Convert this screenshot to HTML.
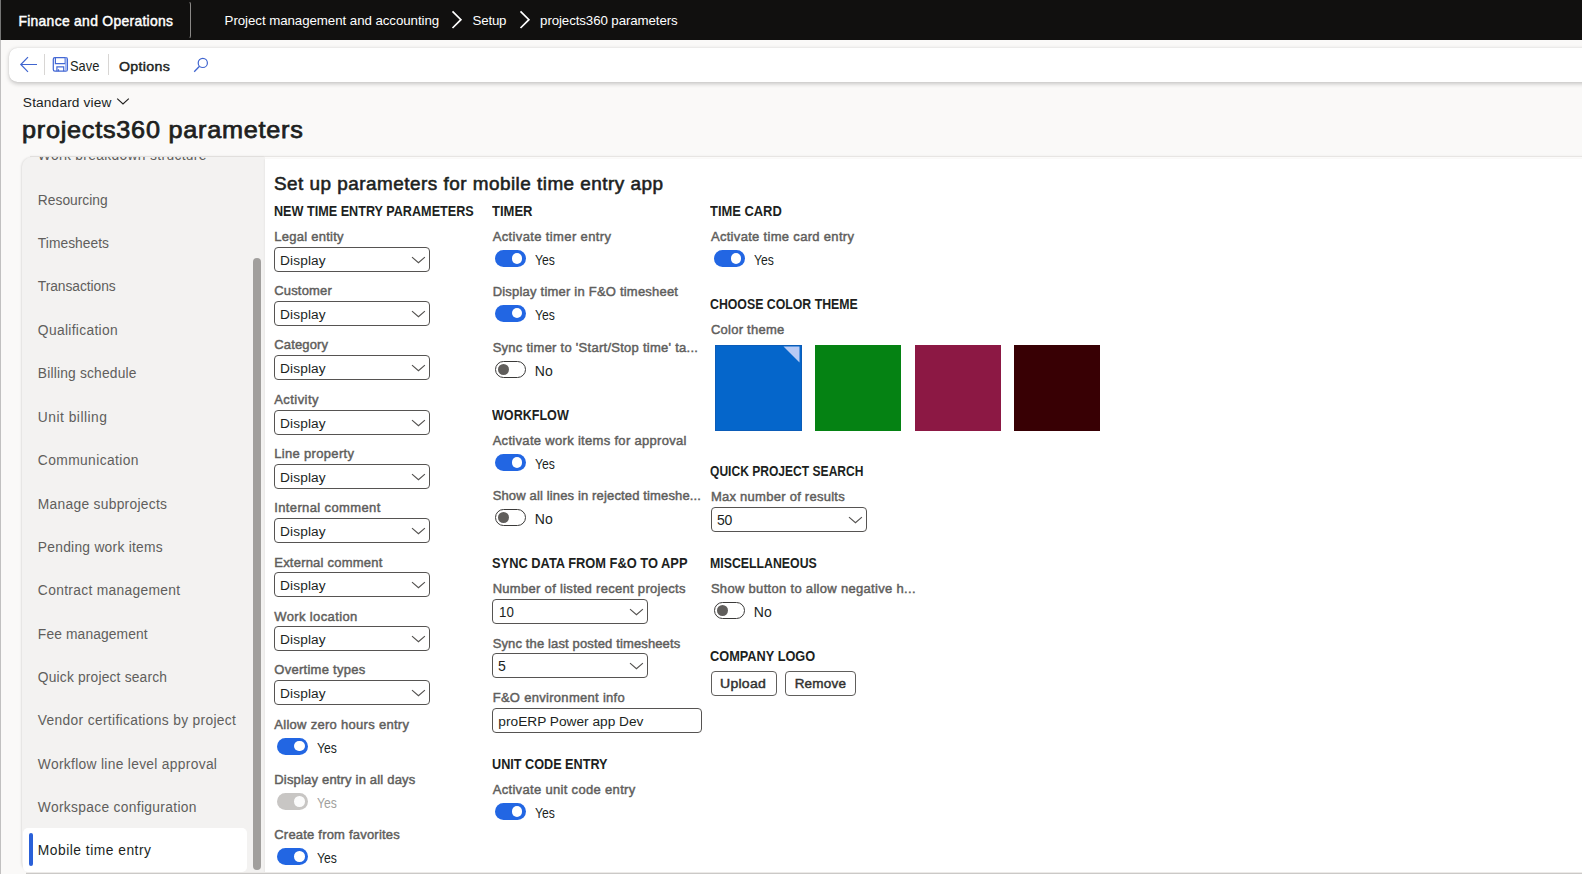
<!DOCTYPE html><html><head><meta charset="utf-8"><title>projects360 parameters</title><style>
html,body{margin:0;padding:0}
body{width:1582px;height:874px;overflow:hidden;background:#faf9f8;position:relative;font-family:"Liberation Sans",sans-serif}
.abs,.t,.box,.tg,.chev,svg.ic{position:absolute}
.t{white-space:nowrap;line-height:20px;z-index:5}
.t{transform-origin:0 50%}
.t.b{font-weight:bold}
.t.sb{-webkit-text-stroke:0.45px currentColor}
.t.sb2{-webkit-text-stroke:0.55px currentColor}
.t.sb3{-webkit-text-stroke:0.75px currentColor}
#topbar{left:0;top:0;width:1582px;height:40px;background:#11100f}
#leftedge{left:0;top:0;width:1.1px;height:874px;background:rgba(165,165,165,.68);z-index:20}
#tdiv{box-sizing:border-box;left:176px;top:0.6px;width:15.2px;height:38.8px;border:1.2px solid transparent;border-right-color:#8a8886;border-radius:0 3.5px 3.5px 0}
#toolbar{left:9px;top:47.5px;width:1600px;height:34.3px;background:#fff;border-radius:8.5px;box-shadow:0 1.5px 4px rgba(0,0,0,.2),0 0 1px rgba(0,0,0,.15)}
.vdiv{width:1px;background:#d8d6d4;top:54px;height:21px}
#side{left:21.6px;top:156.6px;width:243.4px;height:715.8px;background:#f3f2f1;border-radius:10px 0 0 10px;box-shadow:-1px 0 2px rgba(0,0,0,.10)}
#topline{left:30px;top:155.7px;width:1560px;height:1.3px;background:#e7e5e3;box-shadow:0 -1px 2px rgba(0,0,0,.035)}
#content{left:265px;top:159px;width:1330px;height:714px;background:#fff;box-shadow:-1px 0 1.5px rgba(0,0,0,.04)}
#contentpre{left:265px;top:157px;width:1330px;height:2px;background:#fcfbfa}
#bottomline{left:26px;top:872px;width:1560px;height:2px;background:linear-gradient(#eceae8 0,#eceae8 50%,#cbc9c7 50%,#cbc9c7 100%)}
#sel{left:23px;top:828px;width:224px;height:43.6px;background:#fff;border-radius:5px}
#selbar{left:28.9px;top:833px;width:4.1px;height:33px;background:#2a60d8;border-radius:2.1px}
#scroll{left:253.25px;top:258px;width:8px;height:612px;background:#a19f9d;border-radius:4px}
.box{box-sizing:border-box;border:1px solid #565452;border-radius:4px;background:#fff}
.tg{box-sizing:border-box;width:31px;height:17px;border-radius:9px}
.tg.on{background:#2266e3}
.tg.on i{position:absolute;left:16.9px;top:3.2px;width:10.6px;height:10.6px;border-radius:50%;background:#fff}
.tg.dis{background:#c8c6c4}
.tg.dis i{position:absolute;left:16.9px;top:3.2px;width:10.6px;height:10.6px;border-radius:50%;background:#fbfbfb}
.tg.off{background:#fff;border:1px solid #3b3a39}
.tg.off i{position:absolute;left:2px;top:2px;width:11px;height:11px;border-radius:50%;background:#605e5c}
.sq{width:85.75px;height:85.6px;top:345px}
.btn{box-sizing:border-box;border:1px solid #605e5c;border-radius:4px;background:#fff;top:671px;height:25px}
#clipside{left:22px;top:157px;width:243px;height:716px;overflow:hidden}

</style></head><body>
<div id="topbar" class="abs"></div>
<div id="tdiv" class="abs"></div>
<svg class="ic" style="left:450px;top:10px" width="14" height="20" viewBox="0 0 14 20"><path d="M2.5 1.4 L10.9 9.7 L2.5 18" fill="none" stroke="#fff" stroke-width="1.7"/></svg>
<svg class="ic" style="left:517.5px;top:10px" width="14" height="20" viewBox="0 0 14 20"><path d="M2.5 1.4 L10.9 9.7 L2.5 18" fill="none" stroke="#fff" stroke-width="1.7"/></svg>
<div id="toolbar" class="abs"></div>
<div class="abs vdiv" style="left:44px"></div>
<div class="abs vdiv" style="left:108px"></div>
<svg class="ic" style="left:19px;top:55px" width="20" height="19" viewBox="0 0 20 19"><path d="M9 2.2 L1.8 9.5 L9 16.8 M1.8 9.5 L18 9.5" fill="none" stroke="#4065cf" stroke-width="1.2"/></svg>
<svg class="ic" style="left:52px;top:56px" width="17" height="17" viewBox="0 0 17 17"><rect x="1.3" y="1.6" width="14.1" height="13.6" rx="1.6" fill="none" stroke="#4468d4" stroke-width="1.25"/><path d="M3.4 1.6 V7.6 H13.2 V1.6" fill="none" stroke="#4468d4" stroke-width="1.2"/><path d="M13.9 1.6 V15" fill="none" stroke="#8aa4ee" stroke-width="1.4"/><path d="M4.9 15.2 V10.9 H11.7 V15.2 M6.5 15.2 V13.2" fill="none" stroke="#4468d4" stroke-width="1.2"/></svg>
<svg class="ic" style="left:193px;top:57px" width="16" height="16" viewBox="0 0 16 16"><circle cx="9.8" cy="5.9" r="4.6" fill="none" stroke="#4065cf" stroke-width="1.2"/><path d="M6.5 9.3 L1.2 14.8" stroke="#4065cf" stroke-width="1.3" fill="none"/></svg>
<svg class="ic" style="left:115.7px;top:96.5px" width="14" height="10" viewBox="0 0 14 10"><path d="M1.2 1.7 L7 7.0 L12.8 1.7" fill="none" stroke="#201f1e" stroke-width="1.15"/></svg>
<div id="topline" class="abs"></div>
<div id="side" class="abs"></div>
<div id="contentpre" class="abs"></div>
<div id="content" class="abs"></div>
<div id="bottomline" class="abs"></div>
<div id="sel" class="abs"></div>
<div id="selbar" class="abs"></div>
<div id="scroll" class="abs"></div>
<div class="abs sq" style="left:715.25px;width:86.5px;background:#0566cb;box-sizing:border-box;border:1px solid #0b5cb8"></div>
<svg class="ic" style="left:783.1px;top:346.3px" width="17" height="17" viewBox="0 0 17 17"><path d="M0.5 0.5 H16.5 V16.5 Z" fill="#b9cbf5"/></svg>
<div class="abs sq" style="left:815.2px;background:#058213"></div>
<div class="abs sq" style="left:915.2px;background:#8c1844"></div>
<div class="abs sq" style="left:1014.3px;background:#380004"></div>
<div class="abs btn" style="left:711px;width:66px"></div>
<div class="abs btn" style="left:785px;width:71px"></div>
<div id="leftedge" class="abs"></div>

<div class="box" style="left:274px;top:247px;width:156px;height:25px"></div>
<svg class="chev" style="left:410.8px;top:254.7px" width="15" height="10" viewBox="0 0 15 10"><path d="M1.0 2.1 L7.45 7.7 L13.9 2.1" fill="none" stroke="#53514f" stroke-width="1.15"/></svg>
<div class="box" style="left:274px;top:301px;width:156px;height:25px"></div>
<svg class="chev" style="left:410.8px;top:308.7px" width="15" height="10" viewBox="0 0 15 10"><path d="M1.0 2.1 L7.45 7.7 L13.9 2.1" fill="none" stroke="#53514f" stroke-width="1.15"/></svg>
<div class="box" style="left:274px;top:355px;width:156px;height:25px"></div>
<svg class="chev" style="left:410.8px;top:362.7px" width="15" height="10" viewBox="0 0 15 10"><path d="M1.0 2.1 L7.45 7.7 L13.9 2.1" fill="none" stroke="#53514f" stroke-width="1.15"/></svg>
<div class="box" style="left:274px;top:410px;width:156px;height:25px"></div>
<svg class="chev" style="left:410.8px;top:417.7px" width="15" height="10" viewBox="0 0 15 10"><path d="M1.0 2.1 L7.45 7.7 L13.9 2.1" fill="none" stroke="#53514f" stroke-width="1.15"/></svg>
<div class="box" style="left:274px;top:464px;width:156px;height:25px"></div>
<svg class="chev" style="left:410.8px;top:471.7px" width="15" height="10" viewBox="0 0 15 10"><path d="M1.0 2.1 L7.45 7.7 L13.9 2.1" fill="none" stroke="#53514f" stroke-width="1.15"/></svg>
<div class="box" style="left:274px;top:518px;width:156px;height:25px"></div>
<svg class="chev" style="left:410.8px;top:525.7px" width="15" height="10" viewBox="0 0 15 10"><path d="M1.0 2.1 L7.45 7.7 L13.9 2.1" fill="none" stroke="#53514f" stroke-width="1.15"/></svg>
<div class="box" style="left:274px;top:572px;width:156px;height:25px"></div>
<svg class="chev" style="left:410.8px;top:579.7px" width="15" height="10" viewBox="0 0 15 10"><path d="M1.0 2.1 L7.45 7.7 L13.9 2.1" fill="none" stroke="#53514f" stroke-width="1.15"/></svg>
<div class="box" style="left:274px;top:626px;width:156px;height:25px"></div>
<svg class="chev" style="left:410.8px;top:633.7px" width="15" height="10" viewBox="0 0 15 10"><path d="M1.0 2.1 L7.45 7.7 L13.9 2.1" fill="none" stroke="#53514f" stroke-width="1.15"/></svg>
<div class="box" style="left:274px;top:680px;width:156px;height:25px"></div>
<svg class="chev" style="left:410.8px;top:687.7px" width="15" height="10" viewBox="0 0 15 10"><path d="M1.0 2.1 L7.45 7.7 L13.9 2.1" fill="none" stroke="#53514f" stroke-width="1.15"/></svg>
<div class="box" style="left:492px;top:599px;width:156px;height:25px"></div>
<svg class="chev" style="left:628.8px;top:606.7px" width="15" height="10" viewBox="0 0 15 10"><path d="M1.0 2.1 L7.45 7.7 L13.9 2.1" fill="none" stroke="#53514f" stroke-width="1.15"/></svg>
<div class="box" style="left:492px;top:653px;width:156px;height:25px"></div>
<svg class="chev" style="left:628.8px;top:660.7px" width="15" height="10" viewBox="0 0 15 10"><path d="M1.0 2.1 L7.45 7.7 L13.9 2.1" fill="none" stroke="#53514f" stroke-width="1.15"/></svg>
<div class="box" style="left:492px;top:708px;width:210px;height:25px"></div>
<div class="box" style="left:711px;top:507px;width:156px;height:25px"></div>
<svg class="chev" style="left:847.8px;top:514.7px" width="15" height="10" viewBox="0 0 15 10"><path d="M1.0 2.1 L7.45 7.7 L13.9 2.1" fill="none" stroke="#53514f" stroke-width="1.15"/></svg>
<div class="tg on" style="left:277.4px;top:737.7px"><i></i></div>
<div class="tg dis" style="left:277.4px;top:792.75px"><i></i></div>
<div class="tg on" style="left:277.4px;top:847.75px"><i></i></div>
<div class="tg on" style="left:495px;top:249.75px"><i></i></div>
<div class="tg on" style="left:495px;top:304.5px"><i></i></div>
<div class="tg off" style="left:495px;top:361px"><i></i></div>
<div class="tg on" style="left:495px;top:454px"><i></i></div>
<div class="tg off" style="left:495px;top:508.5px"><i></i></div>
<div class="tg on" style="left:495px;top:802.75px"><i></i></div>
<div class="tg on" style="left:714px;top:249.75px"><i></i></div>
<div class="tg off" style="left:714px;top:602px"><i></i></div>
<span class="t sb" style="left:18.40px;top:11.01px;font-size:13.9px;color:#ffffff;letter-spacing:0.302px;">Finance and Operations</span>
<span class="t r" style="left:224.60px;top:11.02px;font-size:13.3px;color:#ffffff;letter-spacing:-0.062px;">Project management and accounting</span>
<span class="t r" style="left:472.60px;top:11.02px;font-size:13.3px;color:#ffffff;letter-spacing:-0.225px;">Setup</span>
<span class="t r" style="left:540.10px;top:11.02px;font-size:13.3px;color:#ffffff;letter-spacing:-0.100px;">projects360 parameters</span>
<span class="t r" style="left:70.35px;top:56.01px;font-size:14px;color:#201f1e;transform:scaleX(0.9194);">Save</span>
<span class="t sb" style="left:118.65px;top:57.00px;font-size:13.4px;color:#201f1e;letter-spacing:0.3px;transform:scaleX(1.0591);">Options</span>
<span class="t r" style="left:22.85px;top:93.00px;font-size:13.7px;color:#201f1e;letter-spacing:0.154px;">Standard view</span>
<span class="t sb3" style="left:21.80px;top:120.02px;font-size:23.6px;color:#201f1e;letter-spacing:0.7px;transform:scaleX(1.0693);">projects360 parameters</span>
<div id="clipside" class="abs"><span class="t r side" style="left:15.85px;top:-11.38px;font-size:13.8px;color:#605e5c;letter-spacing:0.340px;">Work breakdown structure</span></div>
<span class="t r side" style="left:37.85px;top:191.00px;font-size:13.8px;color:#605e5c;letter-spacing:0.006px;">Resourcing</span>
<span class="t r side" style="left:37.85px;top:234.00px;font-size:13.8px;color:#605e5c;letter-spacing:0.034px;">Timesheets</span>
<span class="t r side" style="left:37.85px;top:277.00px;font-size:13.8px;color:#605e5c;letter-spacing:-0.058px;">Transactions</span>
<span class="t r side" style="left:37.85px;top:321.00px;font-size:13.8px;color:#605e5c;letter-spacing:0.326px;">Qualification</span>
<span class="t r side" style="left:37.85px;top:364.00px;font-size:13.8px;color:#605e5c;letter-spacing:0.182px;">Billing schedule</span>
<span class="t r side" style="left:37.85px;top:408.00px;font-size:13.8px;color:#605e5c;letter-spacing:0.495px;">Unit billing</span>
<span class="t r side" style="left:37.85px;top:451.00px;font-size:13.8px;color:#605e5c;letter-spacing:0.395px;">Communication</span>
<span class="t r side" style="left:37.85px;top:495.00px;font-size:13.8px;color:#605e5c;letter-spacing:0.285px;">Manage subprojects</span>
<span class="t r side" style="left:37.85px;top:538.00px;font-size:13.8px;color:#605e5c;letter-spacing:0.261px;">Pending work items</span>
<span class="t r side" style="left:37.85px;top:581.00px;font-size:13.8px;color:#605e5c;letter-spacing:0.324px;">Contract management</span>
<span class="t r side" style="left:37.85px;top:625.00px;font-size:13.8px;color:#605e5c;letter-spacing:0.131px;">Fee management</span>
<span class="t r side" style="left:37.85px;top:668.00px;font-size:13.8px;color:#605e5c;letter-spacing:0.175px;">Quick project search</span>
<span class="t r side" style="left:37.85px;top:711.00px;font-size:13.8px;color:#605e5c;letter-spacing:0.329px;">Vendor certifications by project</span>
<span class="t r side" style="left:37.85px;top:755.00px;font-size:13.8px;color:#605e5c;letter-spacing:0.309px;">Workflow line level approval</span>
<span class="t r side" style="left:37.85px;top:798.00px;font-size:13.8px;color:#605e5c;letter-spacing:0.318px;">Workspace configuration</span>
<span class="t r side" style="left:37.85px;top:841.00px;font-size:13.8px;color:#201f1e;letter-spacing:0.503px;">Mobile time entry</span>
<span class="t sb2" style="left:273.80px;top:174.00px;font-size:17.7px;color:#201f1e;letter-spacing:0.45px;transform:scaleX(1.0688);">Set up parameters for mobile time entry app</span>
<span class="t b" style="left:274.20px;top:201.01px;font-size:14px;color:#201f1e;transform:scaleX(0.9021);">NEW TIME ENTRY PARAMETERS</span>
<span class="t b" style="left:492.20px;top:201.01px;font-size:14px;color:#201f1e;transform:scaleX(0.9297);">TIMER</span>
<span class="t b" style="left:710.45px;top:201.01px;font-size:14px;color:#201f1e;transform:scaleX(0.9225);">TIME CARD</span>
<span class="t b" style="left:710.45px;top:294.01px;font-size:14px;color:#201f1e;transform:scaleX(0.8794);">CHOOSE COLOR THEME</span>
<span class="t b" style="left:492.20px;top:405.01px;font-size:14px;color:#201f1e;transform:scaleX(0.8973);">WORKFLOW</span>
<span class="t b" style="left:710.45px;top:461.01px;font-size:14px;color:#201f1e;transform:scaleX(0.8617);">QUICK PROJECT SEARCH</span>
<span class="t b" style="left:492.20px;top:553.01px;font-size:14px;color:#201f1e;transform:scaleX(0.9184);">SYNC DATA FROM F&amp;O TO APP</span>
<span class="t b" style="left:710.45px;top:553.01px;font-size:14px;color:#201f1e;transform:scaleX(0.8797);">MISCELLANEOUS</span>
<span class="t b" style="left:710.45px;top:646.01px;font-size:14px;color:#201f1e;transform:scaleX(0.9121);">COMPANY LOGO</span>
<span class="t b" style="left:492.20px;top:754.01px;font-size:14px;color:#201f1e;transform:scaleX(0.9036);">UNIT CODE ENTRY</span>
<span class="t sb" style="left:274.25px;top:227.00px;font-size:13px;color:#605e5c;letter-spacing:0.250px;">Legal entity</span>
<span class="t sb" style="left:274.25px;top:281.00px;font-size:13px;color:#605e5c;letter-spacing:0.163px;">Customer</span>
<span class="t sb" style="left:274.25px;top:335.00px;font-size:13px;color:#605e5c;letter-spacing:0.143px;">Category</span>
<span class="t sb" style="left:274.25px;top:390.00px;font-size:13px;color:#605e5c;letter-spacing:0.440px;">Activity</span>
<span class="t sb" style="left:274.25px;top:444.00px;font-size:13px;color:#605e5c;letter-spacing:0.322px;">Line property</span>
<span class="t sb" style="left:274.25px;top:498.00px;font-size:13px;color:#605e5c;letter-spacing:0.371px;">Internal comment</span>
<span class="t sb" style="left:274.25px;top:553.00px;font-size:13px;color:#605e5c;letter-spacing:0.216px;">External comment</span>
<span class="t sb" style="left:274.25px;top:607.00px;font-size:13px;color:#605e5c;letter-spacing:0.374px;">Work location</span>
<span class="t sb" style="left:274.25px;top:660.00px;font-size:13px;color:#605e5c;letter-spacing:0.275px;">Overtime types</span>
<span class="t sb" style="left:274.25px;top:715.00px;font-size:13px;color:#605e5c;letter-spacing:0.292px;">Allow zero hours entry</span>
<span class="t sb" style="left:274.25px;top:770.00px;font-size:13px;color:#605e5c;letter-spacing:0.185px;">Display entry in all days</span>
<span class="t sb" style="left:274.25px;top:825.00px;font-size:13px;color:#605e5c;letter-spacing:0.206px;">Create from favorites</span>
<span class="t sb" style="left:492.65px;top:227.00px;font-size:13px;color:#605e5c;letter-spacing:0.373px;">Activate timer entry</span>
<span class="t sb" style="left:492.65px;top:282.00px;font-size:13px;color:#605e5c;letter-spacing:0.213px;">Display timer in F&amp;O timesheet</span>
<span class="t sb" style="left:492.65px;top:338.00px;font-size:13px;color:#605e5c;letter-spacing:0.268px;">Sync timer to &#x27;Start/Stop time&#x27; ta...</span>
<span class="t sb" style="left:492.65px;top:431.00px;font-size:13px;color:#605e5c;letter-spacing:0.310px;">Activate work items for approval</span>
<span class="t sb" style="left:492.65px;top:486.00px;font-size:13px;color:#605e5c;letter-spacing:0.147px;">Show all lines in rejected timeshe...</span>
<span class="t sb" style="left:492.65px;top:579.00px;font-size:13px;color:#605e5c;letter-spacing:0.301px;">Number of listed recent projects</span>
<span class="t sb" style="left:492.65px;top:634.00px;font-size:13px;color:#605e5c;letter-spacing:0.135px;">Sync the last posted timesheets</span>
<span class="t sb" style="left:492.65px;top:688.00px;font-size:13px;color:#605e5c;letter-spacing:0.297px;">F&amp;O environment info</span>
<span class="t sb" style="left:492.65px;top:780.00px;font-size:13px;color:#605e5c;letter-spacing:0.324px;">Activate unit code entry</span>
<span class="t sb" style="left:710.90px;top:227.00px;font-size:13px;color:#605e5c;letter-spacing:0.316px;">Activate time card entry</span>
<span class="t sb" style="left:710.90px;top:320.00px;font-size:13px;color:#605e5c;letter-spacing:0.254px;">Color theme</span>
<span class="t sb" style="left:710.90px;top:487.00px;font-size:13px;color:#605e5c;letter-spacing:0.262px;">Max number of results</span>
<span class="t sb" style="left:710.90px;top:579.00px;font-size:13px;color:#605e5c;letter-spacing:0.309px;">Show button to allow negative h...</span>
<span class="t r" style="left:280.10px;top:251.00px;font-size:13.7px;color:#201f1e;letter-spacing:0.118px;">Display</span>
<span class="t r" style="left:280.10px;top:305.00px;font-size:13.7px;color:#201f1e;letter-spacing:0.118px;">Display</span>
<span class="t r" style="left:280.10px;top:359.00px;font-size:13.7px;color:#201f1e;letter-spacing:0.118px;">Display</span>
<span class="t r" style="left:280.10px;top:414.00px;font-size:13.7px;color:#201f1e;letter-spacing:0.118px;">Display</span>
<span class="t r" style="left:280.10px;top:468.00px;font-size:13.7px;color:#201f1e;letter-spacing:0.118px;">Display</span>
<span class="t r" style="left:280.10px;top:522.00px;font-size:13.7px;color:#201f1e;letter-spacing:0.118px;">Display</span>
<span class="t r" style="left:280.10px;top:576.00px;font-size:13.7px;color:#201f1e;letter-spacing:0.118px;">Display</span>
<span class="t r" style="left:280.10px;top:630.00px;font-size:13.7px;color:#201f1e;letter-spacing:0.118px;">Display</span>
<span class="t r" style="left:280.10px;top:684.00px;font-size:13.7px;color:#201f1e;letter-spacing:0.118px;">Display</span>
<span class="t r" style="left:498.60px;top:602.00px;font-size:14px;color:#201f1e;transform:scaleX(0.9501);">10</span>
<span class="t r" style="left:498.35px;top:656.01px;font-size:14px;color:#201f1e;transform:scaleX(1.0068);">5</span>
<span class="t r" style="left:498.35px;top:712.00px;font-size:13.7px;color:#201f1e;">proERP Power app Dev</span>
<span class="t r" style="left:717.10px;top:510.01px;font-size:14px;color:#201f1e;letter-spacing:-0.478px;">50</span>
<span class="t r" style="left:317.00px;top:738.01px;font-size:14px;color:#201f1e;transform:scaleX(0.8689);">Yes</span>
<span class="t r" style="left:317.00px;top:793.01px;font-size:14px;color:#a19f9d;transform:scaleX(0.8689);">Yes</span>
<span class="t r" style="left:317.00px;top:848.01px;font-size:14px;color:#201f1e;transform:scaleX(0.8689);">Yes</span>
<span class="t r" style="left:534.60px;top:250.01px;font-size:14px;color:#201f1e;transform:scaleX(0.8689);">Yes</span>
<span class="t r" style="left:534.60px;top:305.01px;font-size:14px;color:#201f1e;transform:scaleX(0.8689);">Yes</span>
<span class="t r" style="left:534.80px;top:361.01px;font-size:14px;color:#201f1e;letter-spacing:0.194px;">No</span>
<span class="t r" style="left:534.60px;top:454.01px;font-size:14px;color:#201f1e;transform:scaleX(0.8689);">Yes</span>
<span class="t r" style="left:534.80px;top:509.01px;font-size:14px;color:#201f1e;letter-spacing:0.194px;">No</span>
<span class="t r" style="left:534.60px;top:803.01px;font-size:14px;color:#201f1e;transform:scaleX(0.8689);">Yes</span>
<span class="t r" style="left:753.60px;top:250.01px;font-size:14px;color:#201f1e;transform:scaleX(0.8689);">Yes</span>
<span class="t r" style="left:753.80px;top:602.01px;font-size:14px;color:#201f1e;letter-spacing:0.194px;">No</span>
<span class="t sb" style="left:720.40px;top:674.00px;font-size:13.5px;color:#323130;letter-spacing:0.25px;transform:scaleX(1.0411);">Upload</span>
<span class="t sb" style="left:794.65px;top:674.00px;font-size:13.5px;color:#323130;letter-spacing:0.214px;">Remove</span>
</body></html>
